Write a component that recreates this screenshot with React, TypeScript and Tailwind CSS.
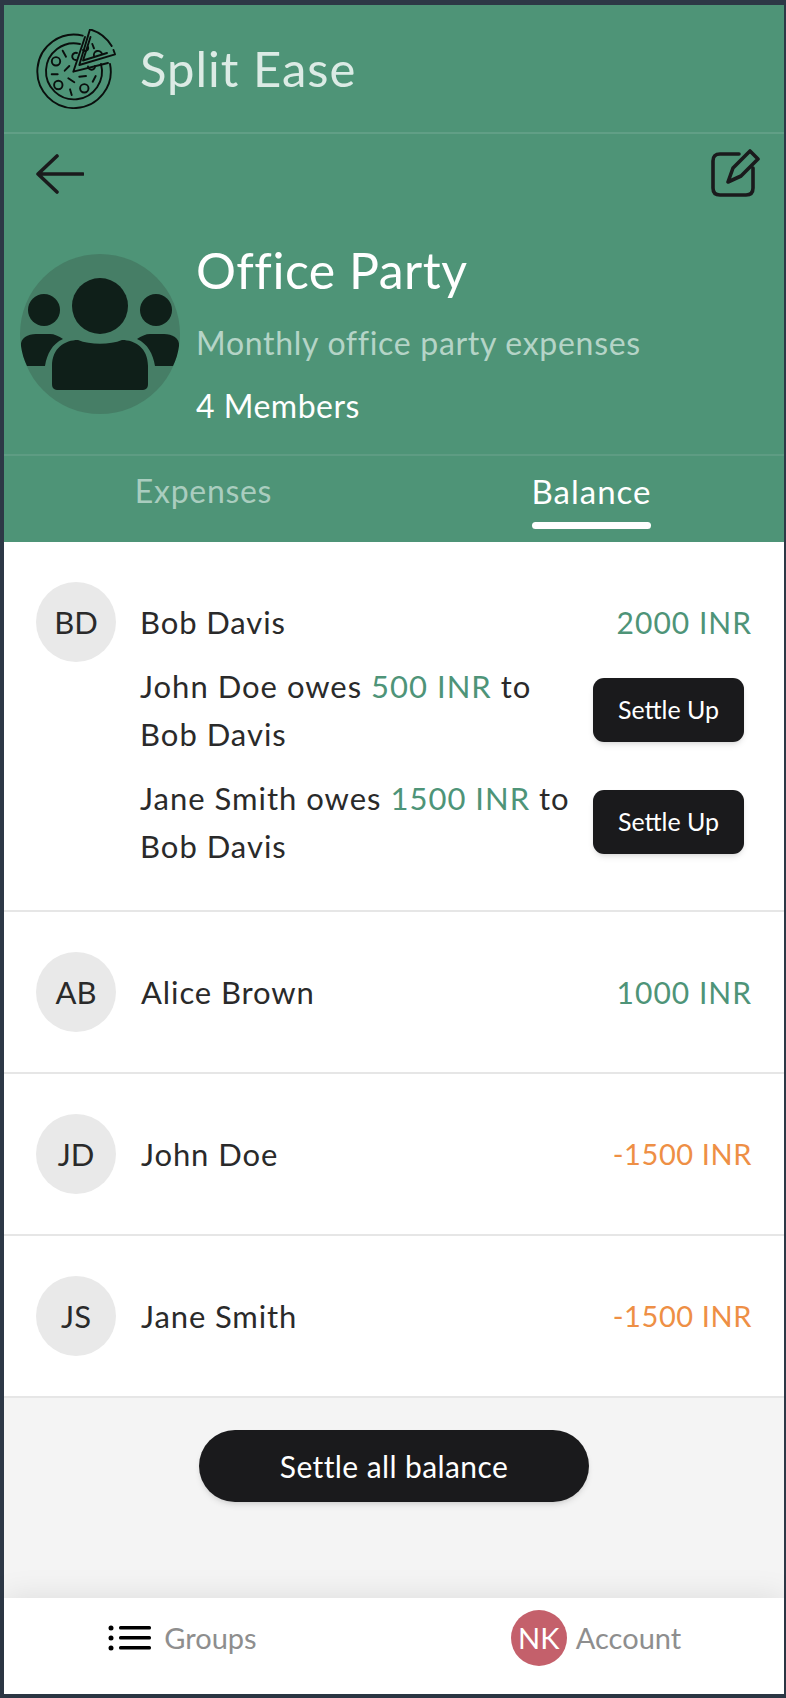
import React from "react";

const font = { fontFamily: '"Lato", "Noto Sans", sans-serif' };

function PizzaLogo() {
  return (
    <svg width="80" height="80" viewBox="6 9 80 80" fill="none" stroke="#0a0f0d" strokeWidth="1.9" strokeLinecap="round" strokeLinejoin="round" className="shrink-0">
      <path d="M52.7 15.7 A36.7 36.7 0 1 0 80 44" />
      <path d="M50 24 A28 28 0 1 0 71 44" />
      <path d="M49.3 45 L60 9.3 C69 12 77 18 81.7 26 M83.5 30 L85 34.3 L49.3 45" />
      <path d="M53 40.5 L60.5 17 M53 40.5 L77 33" />
      <path d="M43.3 51.7 L55 17 M43.3 51.7 L78 43" />
      <circle cx="26" cy="41.3" r="4.2" />
      <circle cx="28.3" cy="65" r="4.2" />
      <circle cx="54.3" cy="68.3" r="4.2" />
      <path d="M47 33 A3.6 3.6 0 1 0 46 40" />
      <path d="M53 30 A3 3 0 0 0 58 27" />
      <path d="M64 36 A3.6 3.6 0 1 1 72 34" />
      <path d="M58 46.5 A3.2 3.2 0 0 0 65 46" />
      <path d="M32.7 30.7 L36 36.7 M34.7 50.7 L39.3 46 M21.7 54.3 L27.7 54.3 M38.3 58.3 L44.3 62.3 M49.3 56.7 L56 56 M65.7 56 L62.7 61.7 M40 69.3 L41.7 75 M62.3 24 L64 28.3" />
    </svg>
  );
}

function GroupAvatar() {
  return (
    <svg width="160" height="160" viewBox="0 0 160 160" className="shrink-0">
      <circle cx="80" cy="80" r="80" fill="#467e66" />
      <g fill="#0f1f19">
        <circle cx="80" cy="52" r="28" />
        <circle cx="24" cy="56" r="16" />
        <circle cx="136" cy="56" r="16" />
        <path d="M32 130 V112 C32 94 45 86 58 86 C70 91 90 91 102 86 C115 86 128 94 128 112 V130 C128 136 124 136 120 136 H40 C36 136 32 136 32 130 Z" />
        <path d="M1 92 C0 84 8 80 16 80 H30 C34 80 39 82 43 85 C32 90 27 100 25 112 H7 C4 106 2 99 1 92 Z" />
        <path d="M159 92 C160 84 152 80 144 80 H130 C126 80 121 82 117 85 C128 90 133 100 135 112 H153 C156 106 158 99 159 92 Z" />
      </g>
    </svg>
  );
}

function Initials({ text }: { text: string }) {
  return (
    <div className="w-20 h-20 rounded-full bg-[#e9e9e9] flex items-center justify-center text-[31px] text-[#2a2a2a] shrink-0">
      {text}
    </div>
  );
}

function SettleRow({ who, amount }: { who: string; amount: string }) {
  return (
    <div className="flex items-center justify-between pr-[8px]">
      <div className="w-[430px] text-[31px] leading-[48px] text-[#2a2a2a] tracking-[1px]">
        {who} owes <span className="text-[#4e9478]">{amount}</span> to
        <br />
        Bob Davis
      </div>
      <button className="w-[151px] h-16 rounded-[11px] bg-[#1a1a1c] text-white text-[25px] shadow-md">Settle Up</button>
    </div>
  );
}

function Row({ initials, name, amount, negative }: { initials: string; name: string; amount: string; negative?: boolean }) {
  return (
    <div className="h-[162px] border-b-2 border-[#e6e6e6] pl-[32px] pr-[32px] flex items-center gap-[25px]">
      <Initials text={initials} />
      <div className="flex-1 text-[31px] text-[#2a2a2a] tracking-[0.9px]">{name}</div>
      {negative ? (
        <div className="text-[29px] tracking-[0.6px] text-[#ee8f45]">{amount}</div>
      ) : (
        <div className="text-[30px] tracking-[1px] text-[#4e9478]">{amount}</div>
      )}
    </div>
  );
}

export default function App() {
  return (
    <div style={font} className="h-[1698px] bg-[#2d3846] pt-[5px] pl-[4px] pr-[2px] pb-[4px]">
      <div className="h-full flex flex-col bg-white">
        <div className="bg-[#4e9477] h-[537px] shrink-0 flex flex-col">
          <div className="h-[129px] border-b-2 border-[#619f86] flex items-center gap-[24px] pl-[32px]">
            <PizzaLogo />
            <div className="text-[49px] text-[#dcebe5] tracking-[1px]">Split Ease</div>
          </div>

          <div className="flex items-start justify-between pt-[14px] pl-[32px] pr-[24px]">
            <svg width="48" height="40" viewBox="0 0 48 40" fill="none" stroke="#1a1a1c" strokeWidth="3.6" strokeLinecap="round" strokeLinejoin="round" className="mt-[6px]">
              <path d="M2 20 H47 M21 2 L2 20 L21 38" />
            </svg>
            <svg width="50" height="50" viewBox="0 0 50 50" fill="none" stroke="#1a1a1c" strokeWidth="3.6" strokeLinecap="round" strokeLinejoin="round">
              <path d="M29 6 H10 Q3 6 3 13 V40 Q3 47 10 47 H36 Q43 47 43 40 V20" />
              <path d="M18 34 L23 20 L40 3 L48 11 L31 28 Z" />
            </svg>
          </div>

          <div className="flex gap-[16px] pl-[16px] mt-[56px]">
            <GroupAvatar />
            <div>
              <div className="text-[50px] leading-[60px] text-white tracking-[0.5px] -mt-[14px]">Office Party</div>
              <div className="text-[32px] leading-[44px] text-[#b5d4c7] tracking-[0.7px] mt-[21px]">Monthly office party expenses</div>
              <div className="text-[32px] leading-[40px] text-white tracking-[0.5px] mt-[21px]">4 Members</div>
            </div>
          </div>

          <div className="mt-auto h-[88px] border-t-2 border-[#5e9c83] grid grid-cols-2">
            <div className="flex justify-center pt-[15px] pl-[9px]">
              <span className="text-[32px] leading-[40px] text-[#aacdbf] tracking-[0.7px]">Expenses</span>
            </div>
            <div className="flex justify-center pt-[15px] pl-[5px]">
              <div>
                <div className="text-[33px] leading-[40px] text-white tracking-[1px]">Balance</div>
                <div className="h-[7px] mt-[11px] rounded-full bg-white" />
              </div>
            </div>
          </div>
        </div>

        <div className="border-b-2 border-[#e6e6e6] h-[370px] pt-[40px] pl-[32px] pr-[32px] flex gap-[24px]">
          <Initials text="BD" />
          <div className="flex-1">
            <div className="h-20 flex items-center justify-between text-[31px] tracking-[0.9px] text-[#2a2a2a]">
              <span>Bob Davis</span>
              <span className="text-[30px] tracking-[1px] text-[#4e9478]">2000 INR</span>
            </div>
            <div className="flex flex-col gap-[16px]">
              <SettleRow who="John Doe" amount="500 INR" />
              <SettleRow who="Jane Smith" amount="1500 INR" />
            </div>
          </div>
        </div>
        <Row initials="AB" name="Alice Brown" amount="1000 INR" />
        <Row initials="JD" name="John Doe" amount="-1500 INR" negative />
        <Row initials="JS" name="Jane Smith" amount="-1500 INR" negative />

        <div className="flex-1 bg-[#f4f4f4] flex justify-center pt-[32px]">
          <button className="w-[390px] h-[72px] rounded-full bg-[#1a1a1c] text-white text-[30px] tracking-[0.4px] shadow-md">Settle all balance</button>
        </div>

        <div className="h-[96px] shrink-0 bg-white shadow-[0_0_30px_rgba(0,0,0,0.1)] relative grid grid-cols-2">
          <div className="flex items-center justify-center gap-[12px] pb-[17px] pr-[33px]">
            <svg width="44" height="26" viewBox="0 0 44 26" fill="#000">
              <circle cx="3" cy="3" r="2.5" />
              <circle cx="3" cy="13" r="2.5" />
              <circle cx="3" cy="23" r="2.5" />
              <rect x="11" y="1" width="32" height="3.6" rx="1.5" />
              <rect x="11" y="11" width="32" height="3.6" rx="1.5" />
              <rect x="11" y="21" width="32" height="3.6" rx="1.5" />
            </svg>
            <span className="text-[29px] text-[#8e8e8e]">Groups</span>
          </div>
          <div className="flex items-center justify-center gap-[9px] pb-[17px] pl-[14px]">
            <div className="w-[56px] h-[56px] rounded-full bg-[#c4606b] flex items-center justify-center text-[29px] text-white">NK</div>
            <span className="text-[29px] text-[#8e8e8e]">Account</span>
          </div>
        </div>
      </div>
    </div>
  );
}
